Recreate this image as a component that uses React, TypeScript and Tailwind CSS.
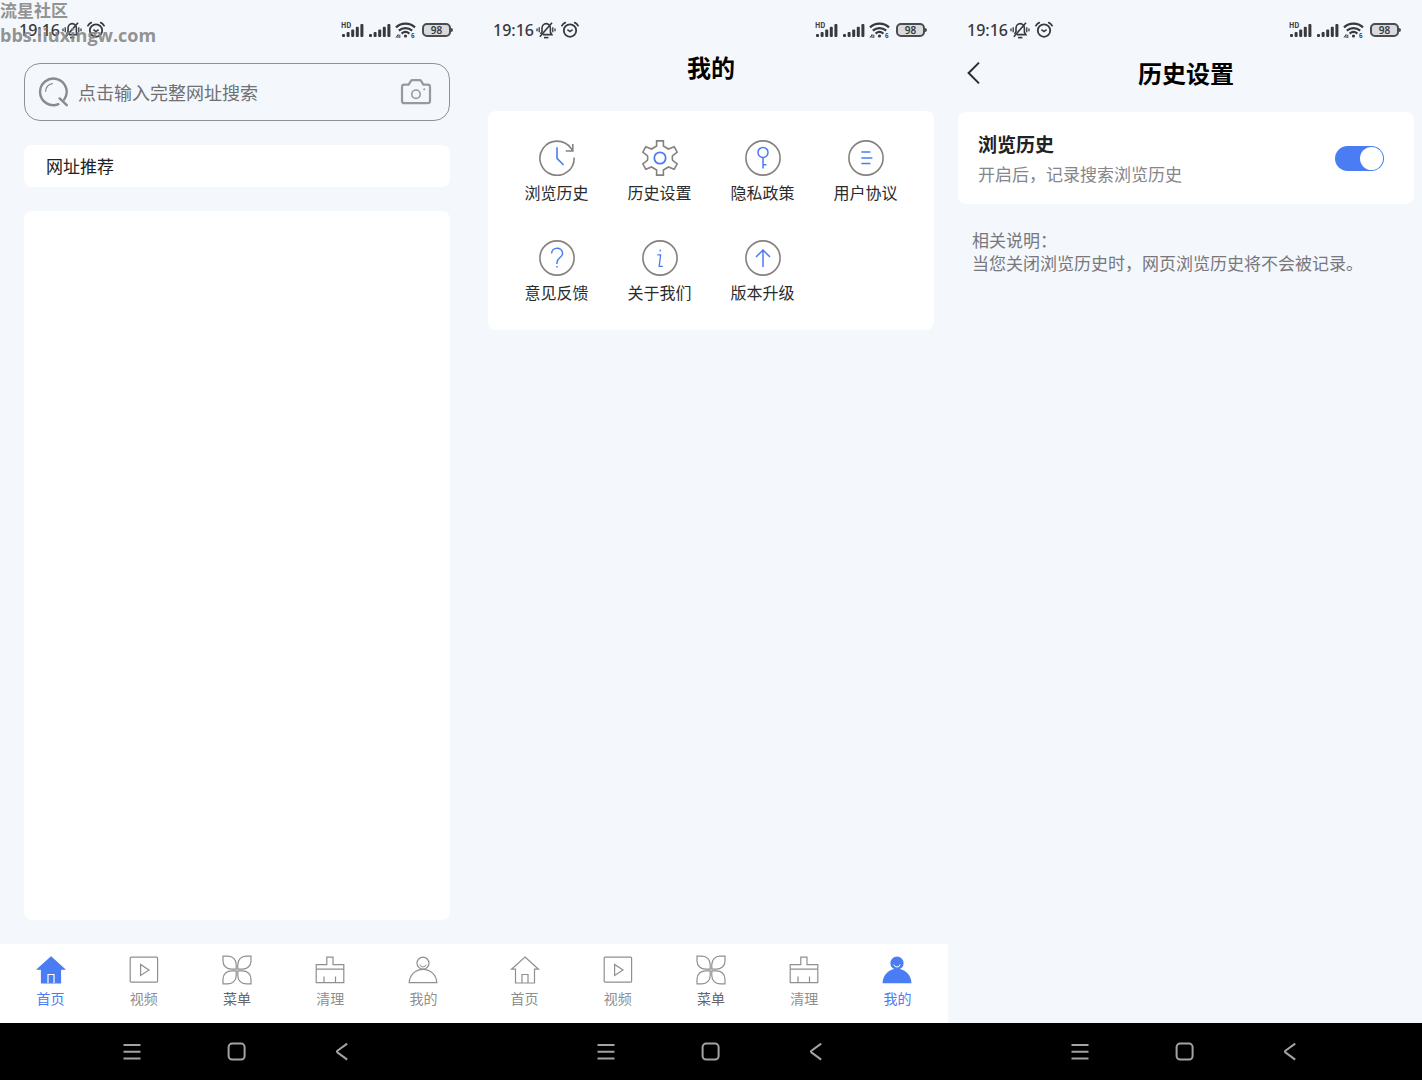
import { ReactNode, useState } from "react";

interface IPropChildren {
    children: ReactNode;
}

interface IPropTabBar {
    active: string;
}

interface IMenuItem {
    label: string;
    icon: ReactNode;
}

/* ---------- status bar ---------- */

const MuteBell = () => (
    <svg className="w-5 h-5" viewBox="0 0 20 20" fill="none" stroke="currentColor" strokeWidth="1.6">
        <path d="M7 14.6H15.8L14.4 12.2V8.2C14.4 5.6 12.6 3.6 10.2 3.6C7.8 3.6 6 5.6 6 8.2V11.6L4.6 14" />
        <path d="M3.8 16.8L16 2.8" />
        <path d="M8 17.6h4.4" />
        <path d="M3.2 7.2v5M1 8.4v2.8M16.8 7.2v5M19 8.4v2.8" strokeWidth="1.3" />
    </svg>
);

const AlarmClock = () => (
    <svg className="w-[18px] h-5" viewBox="0 0 18 20" fill="none" stroke="currentColor" strokeWidth="1.8">
        <circle cx="9" cy="10.6" r="6.2" />
        <path d="M6.4 9.6L9 11.6L11.6 9.6" strokeWidth="1.5" />
        <path d="M1 5.6C1.7 4.2 2.8 3.2 4.2 2.6M17 5.6C16.3 4.2 15.2 3.2 13.8 2.6" strokeLinecap="round" />
    </svg>
);

const SignalBars = ({ hd }: { hd?: boolean }) => (
    <svg className="w-[23px] h-5" viewBox="0 0 23 20" fill="currentColor">
        <rect x="1" y="14" width="3" height="3" rx="1" />
        <rect x="5.6" y="12" width="3" height="5" rx="1" />
        <rect x="10.2" y="9.4" width="3" height="7.6" rx="1" />
        <rect x="14.8" y="6.8" width="3" height="10.2" rx="1" />
        <rect x="19.4" y="4" width="3" height="13" rx="1" />
        {hd && (
            <text x="0" y="8" fontSize="7" fontWeight="700">HD</text>
        )}
    </svg>
);

const WifiSignal = () => (
    <svg className="w-[21px] h-5" viewBox="0 0 21 20" fill="none" stroke="currentColor" strokeWidth="2.2">
        <path d="M1 7.4C6.3 2.4 14.7 2.4 20 7.4" />
        <path d="M3.8 10.6C7.8 7.2 13.2 7.2 17.2 10.6" />
        <path d="M6.6 13.6C9 11.6 12 11.6 14.4 13.6" />
        <circle cx="10.5" cy="16" r="1.6" fill="currentColor" stroke="none" />
        <path d="M1 17.6l2-3v3.4M4.8 18v-3.4" strokeWidth="1" />
        <text x="16" y="18.4" fontSize="6" fontWeight="700" fill="currentColor" stroke="none">6</text>
    </svg>
);

const StatusBar = () => (
    <div className="flex items-center justify-between pt-5 pl-[19px] pr-[21px] text-[#38393c]">
        <div className="flex items-center h-5">
            <span className="font-['Noto_Sans'] text-[16px] font-medium leading-5 mr-[2px]">19:16</span>
            <MuteBell />
            <span className="w-[5px]" />
            <AlarmClock />
        </div>
        <div className="flex items-center h-5 gap-1">
            <SignalBars hd />
            <SignalBars />
            <WifiSignal />
            <div className="flex items-center ml-[2px]">
                <span className="w-[29px] h-[14px] flex items-center justify-center border-2 border-[#4b4c4f] rounded-[5px] bg-[#d9dbde] font-['Noto_Sans'] text-[10px] leading-[10px] font-semibold">
                    98
                </span>
                <span className="w-[2px] h-1 bg-[#4b4c4f] rounded-r-sm" />
            </div>
        </div>
    </div>
);

/* ---------- android navigation bar ---------- */

const SystemBar = () => (
    <div className="h-[57px] bg-black flex items-center justify-center text-[#a3a3a3]">
        <button aria-label="最近任务" className="w-[105px] flex justify-center">
            <svg className="w-5 h-5" viewBox="0 0 20 20" stroke="currentColor" strokeWidth="2">
                <path d="M1.5 3h17M1.5 9.8h17M1.5 16.5h17" />
            </svg>
        </button>
        <button aria-label="主屏幕" className="w-[105px] flex justify-center">
            <svg className="w-5 h-5" viewBox="0 0 20 20" fill="none" stroke="currentColor" strokeWidth="2">
                <rect x="1.6" y="1.6" width="16" height="16" rx="3.5" />
            </svg>
        </button>
        <button aria-label="返回" className="w-[105px] flex justify-center">
            <svg className="w-5 h-5" viewBox="0 0 20 20" fill="none" stroke="currentColor" strokeWidth="2">
                <path d="M15.2 1.6L5.4 8.8Q4.4 9.6 5.4 10.4L15.2 17.6" />
            </svg>
        </button>
    </div>
);

/* ---------- tab bar ---------- */

const TabIcon = ({ children }: IPropChildren) => (
    <svg className="w-[30px] h-[30px]" viewBox="0 0 30 30" fill="none" stroke="currentColor" strokeWidth="1.2">
        {children}
    </svg>
);

const HomeIcon = ({ filled }: { filled: boolean }) => (
    <TabIcon>
        <path d="M15 2L28.5 14.2H24.5V28H5.5V14.2H1.5Z" fill={filled ? "currentColor" : "none"} />
        <path d="M12 28V19.5H18V28" stroke={filled ? "#ffffff" : "currentColor"} />
    </TabIcon>
);

const VideoIcon = () => (
    <TabIcon>
        <rect x="1.2" y="2.2" width="27.4" height="25" rx="1" />
        <path d="M11.6 9.4V20.4L20 14.9Z" />
    </TabIcon>
);

const MenuIcon = () => (
    <TabIcon>
        <path d="M1 1.2H6C11 1.2 14.2 5 14.2 9.6V14.2H9.6C5 14.2 1 11 1 6Z" />
        <path d="M29 1.2H24C19 1.2 15.8 5 15.8 9.6V14.2H20.4C25 14.2 29 11 29 6Z" />
        <path d="M1 28.8H6C11 28.8 14.2 25 14.2 20.4V15.8H9.6C5 15.8 1 19 1 24Z" />
        <path d="M29 28.8H24C19 28.8 15.8 25 15.8 20.4V15.8H20.4C25 15.8 29 19 29 24Z" />
    </TabIcon>
);

const CleanIcon = () => (
    <TabIcon>
        <path d="M1.2 27.6V9.6H11.8V2.2H18V9.6H28.8V27.6Z" />
        <path d="M1.2 14.2H28.8M9 27.6V21.5M20.5 27.6V21.5" />
    </TabIcon>
);

const MineIcon = ({ filled }: { filled: boolean }) => (
    <TabIcon>
        <path d="M1.2 27.6C1.6 20 7.4 14.4 15 14.4C22.6 14.4 28.4 20 28.8 27.6Z" fill={filled ? "currentColor" : "none"} />
        <circle cx="15" cy="8.2" r="6" fill={filled ? "currentColor" : "none"} />
        <path d="M11.8 9.6Q12.4 12 15 12Q17.6 12 18.2 9.6" stroke={filled ? "#ffffff" : "currentColor"} strokeWidth="1" />
    </TabIcon>
);

const TabBar = ({ active }: IPropTabBar) => {
    const tabs = [
        { label: "首页", icon: <HomeIcon filled={active === "首页"} />, color: "text-[#8f8f8f]" },
        { label: "视频", icon: <VideoIcon />, color: "text-[#8f8f8f]" },
        { label: "菜单", icon: <MenuIcon />, color: "text-[#666666]" },
        { label: "清理", icon: <CleanIcon />, color: "text-[#8f8f8f]" },
        { label: "我的", icon: <MineIcon filled={active === "我的"} />, color: "text-[#8f8f8f]" },
    ];

    return (
        <nav className="h-[79px] px-1 pt-[11px] bg-white grid grid-cols-5 items-start">
            {tabs.map((tab) => (
                <button
                    key={tab.label}
                    className={`flex flex-col items-center gap-[3px] ${tab.label === active ? "text-[#4a7cf3]" : "text-[#8f8f8f]"}`}
                >
                    {tab.icon}
                    <span className={`text-[14px] leading-5 ${tab.label === active ? "" : tab.color}`}>
                        {tab.label}
                    </span>
                </button>
            ))}
        </nav>
    );
};

/* ---------- menu icons ---------- */

const RoundIcon = ({ children }: IPropChildren) => (
    <svg className="w-9 h-9" viewBox="0 0 36 36" fill="none" stroke="#4a7cf3" strokeWidth="1.5">
        <circle cx="18" cy="18" r="17.1" stroke="#85817e" strokeWidth="1.6" />
        {children}
    </svg>
);

const menuItems: IMenuItem[] = [
    {
        label: "浏览历史",
        icon: (
            <svg className="w-9 h-9" viewBox="0 0 36 36" fill="none" strokeWidth="1.6" stroke="#85817e">
                <path d="M35.1 17.5A17.1 17.1 0 1 1 32 8.4L33.6 10.8" />
                <path d="M33.8 4V11H26.8" />
                <path d="M18 7.2V18.4L24.6 25" stroke="#4a7cf3" />
            </svg>
        ),
    },
    {
        label: "历史设置",
        icon: (
            <svg className="w-9 h-9" viewBox="0 0 36 36" fill="none" strokeWidth="1.6" stroke="#85817e">
                <path d="M14.6 .9H21.4V6L26.4 9L32.2 6.8L35.2 12.2L30.6 15.6Q30 18 30.6 20.4L35.2 23.8L32.2 29.2L26.4 27L21.4 30V35.1H14.6V30L9.6 27L3.8 29.2L.8 23.8L5.4 20.4Q6 18 5.4 15.6L.8 12.2L3.8 6.8L9.6 9L14.6 6Z" />
                <circle cx="18" cy="18" r="5.7" stroke="#4a7cf3" strokeWidth="1.8" />
            </svg>
        ),
    },
    {
        label: "隐私政策",
        icon: (
            <RoundIcon>
                <circle cx="18" cy="12.4" r="5" />
                <path d="M18 17.4V28.4M18 24.8H21.4" />
            </RoundIcon>
        ),
    },
    {
        label: "用户协议",
        icon: (
            <RoundIcon>
                <path d="M13.4 12H22.4M13.4 18H24.4M13.4 23.6H22.4" />
            </RoundIcon>
        ),
    },
    {
        label: "意见反馈",
        icon: (
            <RoundIcon>
                <path d="M12.6 13.6C12.6 6.4 23.6 6.4 23.6 13.4C23.6 17.4 18 17.8 18 22.6V24" />
                <path d="M18 26V27.6" />
            </RoundIcon>
        ),
    },
    {
        label: "关于我们",
        icon: (
            <RoundIcon>
                <path d="M18.2 9.6V11.4M15.4 14.8H18.6L17.2 26.4H20.8" strokeWidth="1.3" />
            </RoundIcon>
        ),
    },
    {
        label: "版本升级",
        icon: (
            <RoundIcon>
                <path d="M18 27V10.2M11 17L18 10L25 17" />
            </RoundIcon>
        ),
    },
];

/* ---------- screens ---------- */

const Watermark = () => (
    <div className="absolute left-0 top-0 flex flex-col gap-[5px] text-[17px] leading-5 font-bold text-[#858585]/90 pointer-events-none">
        <span>流星社区</span>
        <span className="font-['Open_Sans'] text-[18px]">bbs.liuxingw.com</span>
    </div>
);

const HomeScreen = () => (
    <section className="relative flex flex-col">
        <StatusBar />
        <Watermark />
        <main className="flex-1 flex flex-col gap-6 px-6 pt-[23px] pb-6">
            <div className="h-[58px] flex items-center pl-[13px] pr-[17px] border border-[#8f9295] rounded-2xl">
                <svg className="w-8 h-8 shrink-0" viewBox="0 0 32 32" fill="none" stroke="#8a8b8e" strokeWidth="2.4" strokeLinecap="round">
                    <path d="M20.4 28.2A13.3 13.3 0 1 1 26.2 23.6" />
                    <path d="M21.6 22.4L28.8 29.2" />
                    <path d="M7.6 15.2A8.4 8.4 0 0 1 14.4 7.6" strokeWidth="1.3" />
                </svg>
                <input
                    type="text"
                    aria-label="网址搜索"
                    placeholder="点击输入完整网址搜索"
                    className="flex-1 min-w-0 ml-2 bg-transparent text-[18px] leading-6 outline-none placeholder:text-[#6f7174]"
                />
                <button aria-label="拍照搜索">
                    <svg className="w-8 h-8" viewBox="0 0 32 32" fill="none" stroke="#97999c" strokeWidth="2.2">
                        <path d="M4.4 8.6H8.6L11 4.8Q11.4 4.2 12.2 4.2H19.8Q20.6 4.2 21 4.8L23.4 8.6H27.6Q30 8.6 30 10.8V25Q30 27.2 27.6 27.2H4.4Q2 27.2 2 25V10.8Q2 8.6 4.4 8.6Z" />
                        <circle cx="16" cy="18.2" r="4.2" strokeWidth="1.6" />
                        <circle cx="24.2" cy="13.2" r="1" fill="#97999c" stroke="none" />
                    </svg>
                </button>
            </div>
            <h2 className="h-[42px] flex items-center px-[22px] bg-white rounded-lg text-[17px] text-[#222222]">
                网址推荐
            </h2>
            <div className="flex-1 bg-white rounded-lg" />
        </main>
        <TabBar active="首页" />
        <SystemBar />
    </section>
);

const MineScreen = () => (
    <section className="flex flex-col">
        <StatusBar />
        <main className="flex-1 px-[14px] pt-[11px]">
            <h1 className="text-[24px] leading-8 font-bold text-center text-black">我的</h1>
            <div className="mt-7 px-[17px] pt-[29px] pb-[26px] bg-white rounded-lg grid grid-cols-4 gap-y-9">
                {menuItems.map((item) => (
                    <button key={item.label} className="flex flex-col items-center gap-1">
                        {item.icon}
                        <span className="text-[16px] leading-6 text-[#2b2b2b]">{item.label}</span>
                    </button>
                ))}
            </div>
        </main>
        <TabBar active="我的" />
        <SystemBar />
    </section>
);

const HistorySettingScreen = () => {
    const [enabled, setEnabled] = useState(true);

    return (
        <section className="flex flex-col">
            <StatusBar />
            <main className="flex-1 pl-[10px] pr-2 pt-[15px]">
                <header className="grid grid-cols-[32px_1fr_32px] items-center">
                    <button aria-label="返回" className="pl-[9px]">
                        <svg className="w-4 h-6" viewBox="0 0 16 24" fill="none" stroke="#2c2c2e" strokeWidth="2">
                            <path d="M12 1.6L1.6 12L12 22.4" />
                        </svg>
                    </button>
                    <h1 className="text-[24px] leading-9 font-bold text-center text-black">历史设置</h1>
                </header>
                <div className="mt-[21px] h-[92px] pl-5 pr-[30px] bg-white rounded-lg flex items-center justify-between">
                    <label htmlFor="history" className="flex flex-col gap-1">
                        <span className="text-[19px] leading-7 font-bold text-[#222222]">浏览历史</span>
                        <span className="text-[17px] leading-6 text-[#85868a]">开启后，记录搜索浏览历史</span>
                    </label>
                    <input
                        id="history"
                        type="checkbox"
                        role="switch"
                        checked={enabled}
                        onChange={(e) => setEnabled(e.target.checked)}
                        className="appearance-none w-[49px] h-[25px] p-px rounded-full bg-[#c9cbd0] checked:bg-[#4a7cf3] flex justify-start checked:justify-end before:block before:w-[23px] before:h-[23px] before:rounded-full before:bg-white"
                    />
                </div>
                <div className="mt-6 pl-[14px] text-[17px] leading-[23px] text-[#77787c]">
                    <p>相关说明：</p>
                    <p>当您关闭浏览历史时，网页浏览历史将不会被记录。</p>
                </div>
            </main>
            <SystemBar />
        </section>
    );
};

export default function App() {
    return (
        <div className="min-h-screen grid grid-cols-3 bg-[#f4f7fb] font-['Noto_Sans_CJK_SC','Noto_Sans',sans-serif]">
            <HomeScreen />
            <MineScreen />
            <HistorySettingScreen />
        </div>
    );
}
